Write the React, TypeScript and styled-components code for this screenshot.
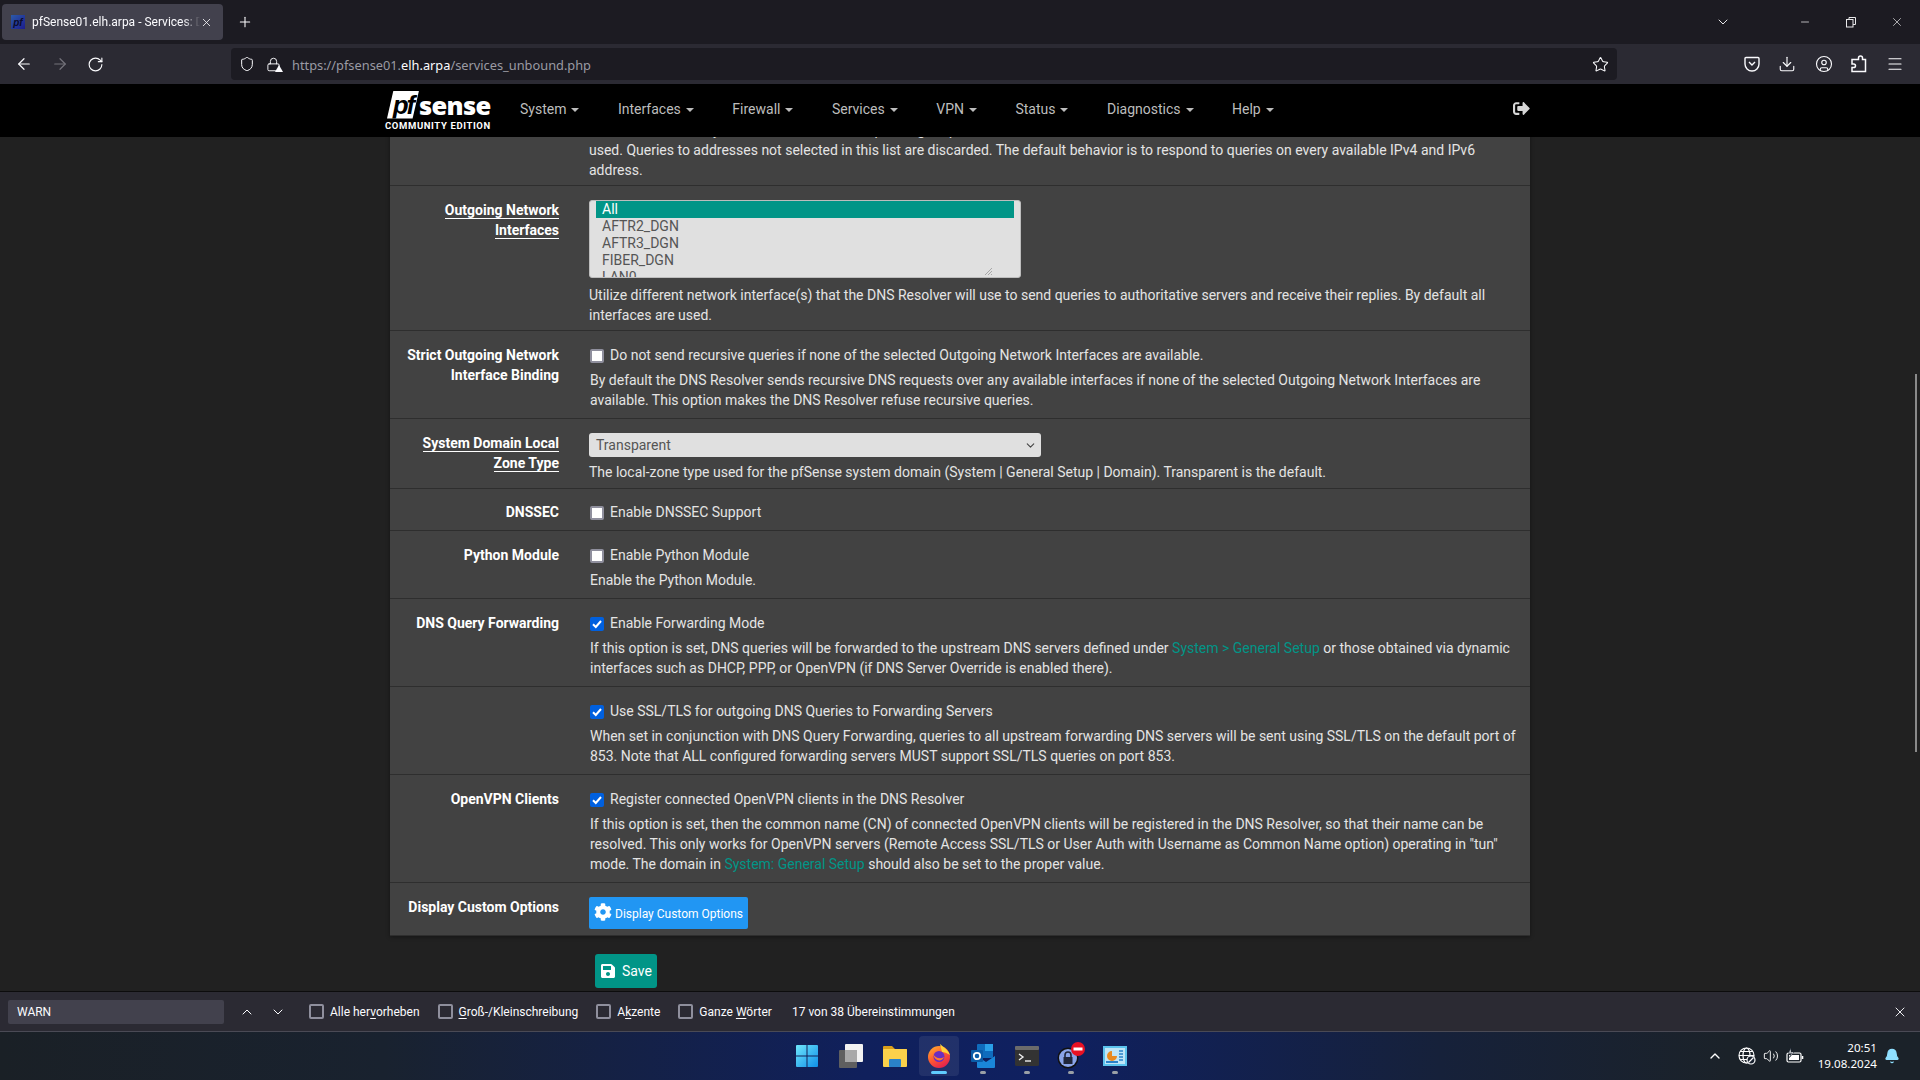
import React from 'react';
import styled, { createGlobalStyle } from 'styled-components';
import {
  ArrowLeft,
  ArrowRight,
  Bell,
  ChevronDown,
  ChevronUp,
  CircleUser,
  Download,
  Lock,
  Menu,
  Minus,
  Plus,
  RotateCw,
  Shield,
  Star,
  Volume2,
  X,
} from 'lucide-react';
import { FaCog, FaSave, FaSignOutAlt } from 'react-icons/fa';

const Global = createGlobalStyle`
  html, body { margin: 0; padding: 0; height: 100%; background: #212121; overflow: hidden; }
  * { box-sizing: border-box; }
`;

const Shell = styled.div`
  display: flex;
  flex-direction: column;
  width: 1920px;
  height: 1080px;
  overflow: hidden;
  font-family: 'Roboto', 'Open Sans', sans-serif;
`;

/* browser chrome */
const TabBar = styled.div`
  display: flex;
  align-items: center;
  height: 44px;
  flex: none;
  padding-left: 2px;
  background: #1c1b22;
  color: #fbfbfe;
`;

const Tab = styled.div`
  display: flex;
  align-items: center;
  width: 221px;
  height: 36px;
  padding: 0 10px 0 9px;
  border-radius: 4px;
  background: #42414d;
  font-size: 12px;
`;

const Favicon = styled.span`
  display: flex;
  align-items: center;
  justify-content: center;
  width: 14px;
  height: 14px;
  flex: none;
  background: linear-gradient(135deg, #2c5aa8, #1c1c8c);
  color: #0c0c2c;
  font: italic 700 10px 'Liberation Sans', sans-serif;
`;

const TabTitle = styled.span`
  flex: 1;
  margin-left: 7px;
  overflow: hidden;
  white-space: nowrap;
  -webkit-mask-image: linear-gradient(90deg, #000 90%, transparent 100%);
  mask-image: linear-gradient(90deg, #000 90%, transparent 100%);
`;

const NewTab = styled.span`
  display: flex;
  margin-left: 14px;
`;

const WindowControls = styled.div`
  display: flex;
  align-items: center;
  margin-left: auto;
`;

const WindowSlot = styled.span<{ $w: number }>`
  display: flex;
  align-items: center;
  justify-content: center;
  width: ${(p) => p.$w}px;
  color: #e8e8ea;
`;

const Toolbar = styled.div`
  display: flex;
  align-items: center;
  height: 40px;
  flex: none;
  background: #2b2a33;
  color: #fbfbfe;
`;

const NavButtons = styled.div`
  display: flex;
  align-items: center;
  gap: 18px;
  width: 231px;
  padding-left: 15px;
`;

const UrlBar = styled.div`
  display: flex;
  align-items: center;
  width: 1386px;
  height: 32px;
  padding: 0 8px 0 8px;
  border-radius: 4px;
  background: #1c1b22;
  color: #9a9aa3;
`;

const UrlText = styled.span`
  padding-top: 1px;
  font: 12.8px 'Noto Sans', sans-serif;
`;

const LockWrap = styled.span`
  position: relative;
  display: flex;
  margin: 0 11px 0 11px;
  color: #fbfbfe;
`;

const LockWarn = styled.span`
  position: absolute;
  right: -2px;
  bottom: 0;
  width: 0;
  height: 0;
  border-left: 4px solid transparent;
  border-right: 4px solid transparent;
  border-bottom: 7px solid #fbfbfe;
`;

const Host = styled.span`
  color: #fbfbfe;
`;

const StarSlot = styled.span`
  display: flex;
  margin-left: auto;
`;

const ToolIcons = styled.div`
  display: flex;
  align-items: center;
  gap: 18.4px;
  margin-left: 127px;
`;

/* pfSense navbar */
const Navbar = styled.div`
  height: 53px;
  flex: none;
  background: #000;
`;

const Container = styled.div`
  display: flex;
  align-items: center;
  width: 1170px;
  height: 100%;
  margin: 0 auto;
  padding: 0 15px 0 10px;
`;

const Logo = styled.div`
  display: flex;
  flex-direction: column;
  width: 106px;
  margin-right: 29px;
`;

const LogoTop = styled.div`
  display: flex;
  align-items: center;
  height: 28px;
  padding-left: 2px;
`;

const LogoPf = styled.span`
  display: flex;
  align-items: center;
  justify-content: center;
  width: 32px;
  height: 28px;
  background: #fff;
  clip-path: polygon(20% 0, 100% 0, 80% 100%, 0 100%);
  color: #000;
  font: italic 700 26px/1 'Liberation Sans', sans-serif;
  letter-spacing: -2px;
`;

const LogoSense = styled.span`
  color: #fff;
  font: 800 25.5px/28px 'Open Sans', sans-serif;
  letter-spacing: -0.7px;
`;

const LogoEdition = styled.span`
  margin-top: 2px;
  color: #fff;
  font: 700 9.5px/10px 'Roboto', sans-serif;
  letter-spacing: 0.62px;
  white-space: nowrap;
`;

const NavMenu = styled.div`
  display: flex;
  align-items: center;
  gap: 38.5px;
  margin-top: -3px;
  font: 14px 'Roboto', sans-serif;
  color: #bdbdbd;
`;

const NavItem = styled.span`
  display: flex;
  align-items: center;
  gap: 5px;
  &::after {
    content: '';
    margin-top: 2px;
    border-left: 4px solid transparent;
    border-right: 4px solid transparent;
    border-top: 4px solid #bdbdbd;
  }
`;

const Logout = styled.span`
  display: flex;
  margin-left: auto;
  color: #d6d6d6;
  transform: translateY(-2px);
`;

/* page */
const Page = styled.div`
  position: relative;
  flex: 1;
  overflow: hidden;
  background: #212121;
  font: 14px/20px 'Roboto', sans-serif;
  color: #e4e4e4;
`;

const Scrollbar = styled.div`
  position: absolute;
  top: 237px;
  right: 3px;
  width: 2px;
  height: 378px;
  background: #8a8a8a;
`;

const Content = styled.div`
  width: 1140px;
  margin: -17px auto 0;
`;

const Panel = styled.div`
  background: #424242;
  box-shadow: 0 1px 4px rgba(0, 0, 0, 0.4);
`;

const Row = styled.div<{ $top?: number; $bottom?: number }>`
  display: grid;
  grid-template-columns: 169px 1fr;
  column-gap: 30px;
  padding: ${(p) => p.$top ?? 14}px 12px ${(p) => p.$bottom ?? 8}px 0;
  border-bottom: 1px solid #2e2e2e;
`;

const Label = styled.div`
  text-align: right;
  font-weight: 700;
  color: #fff;
`;

const Linked = styled.span`
  border-bottom: 1px solid #fff;
`;

const Field = styled.div`
  min-width: 0;
`;

const Help = styled.div<{ $inset?: boolean; $gap?: number }>`
  margin-top: ${(p) => p.$gap ?? 5}px;
  padding-left: ${(p) => (p.$inset ? 1 : 0)}px;
`;

const Link = styled.span`
  color: #019587;
`;

const CheckLine = styled.div`
  display: flex;
  align-items: center;
  padding-left: 1px;
  gap: 6px;
`;

const Box = styled.span<{ $on?: boolean }>`
  display: flex;
  align-items: center;
  justify-content: center;
  width: 14px;
  height: 14px;
  flex: none;
  margin-top: 1px;
  border-radius: 2px;
  background: ${(p) => (p.$on ? '#0060df' : '#fff')};
  border: ${(p) => (p.$on ? 'none' : '2px solid #8f8f9d')};
`;

const ListBox = styled.div`
  position: relative;
  width: 432px;
  height: 78px;
  padding: 0 6px;
  overflow: hidden;
  border: 1px solid #bdbdbd;
  border-radius: 3px;
  background: #e0e0e0;
  color: #555;
  line-height: 17px;
`;

const Option = styled.div<{ $on?: boolean }>`
  height: 17px;
  padding-left: 6px;
  background: ${(p) => (p.$on ? '#019587' : 'transparent')};
  color: ${(p) => (p.$on ? '#fff' : '#555')};
`;

const Grip = styled.svg`
  position: absolute;
  right: 28px;
  bottom: 2px;
`;

const SelectBox = styled.div`
  display: flex;
  align-items: center;
  justify-content: space-between;
  width: 452px;
  height: 24px;
  padding: 0 4px 0 7px;
  border-radius: 3px;
  background: #e0e0e0;
  color: #555;
`;

const Button = styled.div<{ $bg: string }>`
  display: inline-flex;
  align-items: center;
  color: #fff;
  background: ${(p) => p.$bg};
`;

const CustomButton = styled(Button)`
  height: 32px;
  padding: 2px 5px 0 5px;
  gap: 3px;
  border-radius: 2px;
  font-size: 12px;
  svg { margin-top: -4px; }
`;

const SaveRow = styled.div`
  padding: 18px 0 0 205px;
`;

const SaveButton = styled(Button)`
  height: 34px;
  padding: 0 5px;
  gap: 6px;
  border-radius: 3px;
`;

/* find bar */
const FindBar = styled.div`
  display: flex;
  align-items: center;
  height: 41px;
  flex: none;
  padding-right: 12px;
  border-top: 1px solid #0c0c0d;
  border-bottom: 1px solid #4a4a55;
  background: #2b2a33;
  color: #fbfbfe;
  font-size: 12px;
`;

const FindInput = styled.div`
  display: flex;
  align-items: center;
  width: 216px;
  height: 24px;
  margin-left: 8px;
  padding-left: 9px;
  border-radius: 2px;
  background: #42414d;
`;

const FindArrows = styled.div`
  display: flex;
  gap: 15px;
  margin: 0 23px 0 15px;
`;

const FindOption = styled.label`
  display: flex;
  align-items: center;
  gap: 6px;
  margin-right: 18px;
  u { text-underline-offset: 2px; }
`;

const FindBox = styled.span`
  width: 15px;
  height: 15px;
  border: 2px solid #8f8f9d;
  border-radius: 2px;
`;

const FindCount = styled.span`
  margin-left: 2px;
`;

const FindClose = styled.span`
  display: flex;
  margin-left: auto;
`;

/* taskbar */
const Taskbar = styled.div`
  position: relative;
  display: flex;
  align-items: center;
  justify-content: center;
  height: 48px;
  flex: none;
  background: linear-gradient(90deg, #1a2026 0, #19222f 20%, #10205c 45%, #0f2060 55%, #16213a 75%, #1b2229 90%);
  color: #fff;
`;

const TaskIcons = styled.div`
  display: flex;
  align-items: center;
  transform: translateX(1px);
`;

const TaskSlot = styled.span<{ $active?: boolean; $dot?: boolean }>`
  position: relative;
  display: flex;
  align-items: center;
  justify-content: center;
  width: 40px;
  height: 40px;
  margin: 0 2px;
  border-radius: 4px;
  background: ${(p) => (p.$active ? 'rgba(255,255,255,0.08)' : 'transparent')};
  &::after {
    content: '';
    display: ${(p) => (p.$active || p.$dot ? 'block' : 'none')};
    position: absolute;
    bottom: 2px;
    left: 50%;
    width: ${(p) => (p.$active ? 16 : 6)}px;
    height: 3px;
    margin-left: ${(p) => (p.$active ? -8 : -3)}px;
    border-radius: 2px;
    background: ${(p) => (p.$active ? '#60cdff' : '#9aa0a6')};
  }
`;

const Tray = styled.div`
  position: absolute;
  top: 0;
  right: 0;
  bottom: 0;
  display: flex;
  align-items: center;
`;

const TrayIcon = styled.span<{ $w: number }>`
  display: flex;
  justify-content: center;
  width: ${(p) => p.$w}px;
`;

const Clock = styled.div`
  margin: 0 7px 0 10px;
  text-align: right;
  font: 11.6px/16px 'Noto Sans', sans-serif;
`;

const BellSlot = styled.span`
  display: flex;
  margin-right: 20px;
  color: #8fe0ff;
`;

const RestoreIcon = () => (
  <svg width="12" height="12" viewBox="0 0 12 12" fill="none" stroke="currentColor">
    <rect x="1.5" y="3.5" width="6.5" height="7.5" />
    <path d="M4 3.5V1.5H10.5V8.5H8" />
  </svg>
);

const PocketIcon = () => (
  <svg width="16" height="16" viewBox="0 0 16 16" fill="none" stroke="currentColor" strokeWidth="1.4">
    <path d="M2 1.5h12a1 1 0 0 1 1 1V8a7 7 0 0 1-14 0V2.5a1 1 0 0 1 1-1z" />
    <path d="M5 6l3 3 3-3" />
  </svg>
);

const PuzzleIcon = () => (
  <svg width="16" height="18" viewBox="0 0 16 18" fill="none" stroke="currentColor" strokeWidth="1.5">
    <path d="M8 4.500V3a2 2 0 0 1 4 0v1.500h3v12H1.500v-4h1.700a1.800 1.800 0 0 0 0-3.600H1.500V4.500z" transform="translate(-0.500 0)" />
  </svg>
);

const TrayGlobeIcon = () => (
  <svg width="18" height="18" viewBox="0 0 18 18" fill="none" stroke="currentColor" strokeWidth="1.2">
    <circle cx="8.500" cy="8.500" r="7.500" />
    <ellipse cx="8.500" cy="8.500" rx="3.500" ry="7.500" />
    <path d="M1 8.500h15M2 4.500h13M2 12.500h8" />
    <circle cx="13" cy="13" r="4" fill="#19222f" />
    <path d="M10.500 15.500l5-5" />
  </svg>
);

const TrayBatteryIcon = () => (
  <svg width="18" height="16" viewBox="0 0 18 16" fill="none" stroke="currentColor" strokeWidth="1.2">
    <rect x="1" y="5" width="14" height="9" rx="1.500" />
    <rect x="3" y="7" width="10" height="5" fill="currentColor" stroke="none" />
    <path d="M16.500 8v3" strokeWidth="1.600" />
    <path d="M5 0L2.500 5h3L3.500 9.500 8 4H5z" fill="currentColor" stroke="#19222f" strokeWidth="0.600" />
  </svg>
);

const WindowsIcon = () => (
  <svg width="24" height="24" viewBox="0 0 24 24">
    <defs>
      <linearGradient id="win" x1="0" y1="0" x2="1" y2="1">
        <stop offset="0" stopColor="#6fe6fb" />
        <stop offset="1" stopColor="#0f8fe8" />
      </linearGradient>
    </defs>
    <path fill="url(#win)" d="M1 2a1 1 0 0 1 1-1h9.500v10.500H1zM12.500 1H22a1 1 0 0 1 1 1v9.500H12.500zM1 12.500h10.500V23H2a1 1 0 0 1-1-1zM12.500 12.500H23V22a1 1 0 0 1-1 1h-9.500z" />
  </svg>
);

const DesktopsIcon = () => (
  <svg width="24" height="24" viewBox="0 0 24 24">
    <rect x="0" y="6" width="18" height="18" rx="1" fill="#5f5f5f" />
    <rect x="6" y="0" width="18" height="18" rx="1" fill="#f2f2f2" />
    <rect x="6" y="6" width="12" height="12" fill="#a8a8a8" />
  </svg>
);

const FolderIcon = () => (
  <svg width="24" height="24" viewBox="0 0 24 24">
    <path d="M0 3a1 1 0 0 1 1-1h8l3 3h12v3H0z" fill="#d99e1a" />
    <rect x="0" y="5" width="24" height="18" rx="1" fill="#fbd14b" />
    <rect x="6" y="15" width="12" height="8" rx="1" fill="#2a82c9" />
  </svg>
);

const FirefoxIcon = () => (
  <svg width="24" height="24" viewBox="0 0 24 24">
    <defs>
      <linearGradient id="ff" x1="0" y1="0" x2="0.6" y2="1">
        <stop offset="0" stopColor="#ffb52e" />
        <stop offset="0.55" stopColor="#ff5a30" />
        <stop offset="1" stopColor="#e3244d" />
      </linearGradient>
    </defs>
    <circle cx="12" cy="13" r="11" fill="url(#ff)" />
    <path d="M13 0c3 3 8 5 10 11-3-2-6-3-8-3z" fill="#ffd23a" />
    <circle cx="12" cy="12.500" r="5.500" fill="#6b2ec0" />
    <path d="M6 10c3 5 8 5 11 3-2 5-9 5-11-3z" fill="#ff7a2e" />
  </svg>
);

const OutlookIcon = () => (
  <svg width="24" height="24" viewBox="0 0 24 24">
    <rect x="6" y="0" width="16" height="14" rx="1" fill="#0f6cbd" />
    <rect x="14" y="0" width="8" height="7" fill="#2aa0e8" />
    <path d="M6 12l9 6 9-6v11a1 1 0 0 1-1 1H7a1 1 0 0 1-1-1z" fill="#1a86d8" />
    <rect x="0" y="6" width="12" height="12" rx="1" fill="#0a5ca8" />
    <circle cx="6" cy="12" r="3.200" fill="none" stroke="#fff" strokeWidth="1.800" />
  </svg>
);

const TerminalIcon = () => (
  <svg width="24" height="24" viewBox="0 0 24 24">
    <rect x="0" y="2" width="24" height="20" rx="1.500" fill="#333" />
    <rect x="0" y="2" width="24" height="4" rx="1" fill="#6b6b6b" />
    <path d="M4 10l4 3-4 3" fill="none" stroke="#eee" strokeWidth="1.400" />
    <path d="M10 17h6" stroke="#eee" strokeWidth="1.400" />
  </svg>
);

const VpnIcon = () => (
  <svg width="28" height="28" viewBox="0 0 28 28">
    <circle cx="11" cy="16" r="10.500" fill="#111" />
    <circle cx="11" cy="16" r="9" fill="#8aa4e8" />
    <rect x="6.500" y="15" width="9" height="7" fill="#20263a" />
    <path d="M8 15v-2a3 3 0 0 1 6 0v2" fill="none" stroke="#20263a" strokeWidth="1.600" />
    <circle cx="21" cy="7" r="7" fill="#e81123" />
    <rect x="16.500" y="5.500" width="9" height="3" fill="#fff" />
  </svg>
);

const DashboardIcon = () => (
  <svg width="24" height="24" viewBox="0 0 24 24">
    <rect x="0" y="2" width="24" height="20" fill="#5cc4ee" />
    <rect x="2" y="4" width="20" height="16" fill="#bfe6f7" />
    <path d="M9 7a5 5 0 1 0 5 5H9z" fill="#e88a1f" />
    <rect x="3" y="17" width="12" height="2" fill="#2a82c9" />
    <path d="M16 7h4M16 10h4M16 13h4M16 16h4" stroke="#2a82c9" strokeWidth="1.500" />
  </svg>
);

const checkMark = (
  <svg width="10" height="10" viewBox="0 0 10 10" fill="none" stroke="#fff" strokeWidth="2">
    <path d="M1 5.200l2.800 2.800L9 2" />
  </svg>
);

const Check = ({ on, children }: { on?: boolean; children: React.ReactNode }) => (
  <CheckLine>
    <Box $on={on}>{on && checkMark}</Box>
    <span>{children}</span>
  </CheckLine>
);

const menu = ['System', 'Interfaces', 'Firewall', 'Services', 'VPN', 'Status', 'Diagnostics', 'Help'];

export default function App() {
  return (
    <Shell>
      <Global />
      <TabBar>
        <Tab>
          <Favicon>pf</Favicon>
          <TabTitle>pfSense01.elh.arpa - Services: DNS Resolver</TabTitle>
          <X size={13} strokeWidth={1.5} />
        </Tab>
        <NewTab>
          <Plus size={16} strokeWidth={1.6} />
        </NewTab>
        <WindowControls>
          <WindowSlot $w={46}>
            <ChevronDown size={16} strokeWidth={1.5} />
          </WindowSlot>
          <WindowSlot $w={36} />
          <WindowSlot $w={46}>
            <Minus size={12} strokeWidth={1.5} />
          </WindowSlot>
          <WindowSlot $w={46}>
            <RestoreIcon />
          </WindowSlot>
          <WindowSlot $w={46}>
            <X size={14} strokeWidth={1.2} />
          </WindowSlot>
        </WindowControls>
      </TabBar>
      <Toolbar>
        <NavButtons>
          <ArrowLeft size={18} strokeWidth={1.6} />
          <ArrowRight size={18} strokeWidth={1.6} color="#74737b" />
          <RotateCw size={17} strokeWidth={1.6} />
        </NavButtons>
        <UrlBar>
          <Shield size={16} strokeWidth={1.5} color="#fbfbfe" />
          <LockWrap>
            <Lock size={15} strokeWidth={1.5} />
            <LockWarn />
          </LockWrap>
          <UrlText>
            https://pfsense01.<Host>elh.arpa</Host>/services_unbound.php
          </UrlText>
          <StarSlot>
            <Star size={17} strokeWidth={1.5} color="#fbfbfe" />
          </StarSlot>
        </UrlBar>
        <ToolIcons>
          <PocketIcon />
          <Download size={18} strokeWidth={1.5} />
          <CircleUser size={18} strokeWidth={1.5} />
          <PuzzleIcon />
          <Menu size={18} strokeWidth={1.5} />
        </ToolIcons>
      </Toolbar>
      <Navbar>
        <Container>
          <Logo>
            <LogoTop>
              <LogoPf>pf</LogoPf>
              <LogoSense>sense</LogoSense>
            </LogoTop>
            <LogoEdition>COMMUNITY EDITION</LogoEdition>
          </Logo>
          <NavMenu>
            {menu.map((m) => (
              <NavItem key={m}>{m}</NavItem>
            ))}
          </NavMenu>
          <Logout>
            <FaSignOutAlt size={17} />
          </Logout>
        </Container>
      </Navbar>
      <Page>
        <Content>
          <Panel>
            <Row $top={0} $bottom={5}>
              <Label />
              <Field>
                Interface IPs used by the DNS Resolver for responding to queries from clients. If an interface has both IPv4 and IPv6 IPs, both are
                <br />
                used. Queries to addresses not selected in this list are discarded. The default behavior is to respond to queries on every available IPv4 and IPv6
                <br />
                address.
              </Field>
            </Row>
            <Row $bottom={5}>
              <Label>
                <Linked>Outgoing Network Interfaces</Linked>
              </Label>
              <Field>
                <ListBox>
                  <Option $on>All</Option>
                  <Option>AFTR2_DGN</Option>
                  <Option>AFTR3_DGN</Option>
                  <Option>FIBER_DGN</Option>
                  <Option>LAN0</Option>
                  <Grip width="8" height="8" viewBox="0 0 8 8" stroke="#a8a8a8">
                    <path d="M1 8L8 1M4 8L8 4M7 8L8 7" />
                  </Grip>
                </ListBox>
                <Help $gap={7}>
                  Utilize different network interface(s) that the DNS Resolver will use to send queries to authoritative servers and receive their replies. By default all
                  <br />
                  interfaces are used.
                </Help>
              </Field>
            </Row>
            <Row>
              <Label>Strict Outgoing Network Interface Binding</Label>
              <Field>
                <Check>Do not send recursive queries if none of the selected Outgoing Network Interfaces are available.</Check>
                <Help $inset>
                  By default the DNS Resolver sends recursive DNS requests over any available interfaces if none of the selected Outgoing Network Interfaces are
                  <br />
                  available. This option makes the DNS Resolver refuse recursive queries.
                </Help>
              </Field>
            </Row>
            <Row $bottom={6}>
              <Label>
                <Linked>System Domain Local Zone Type</Linked>
              </Label>
              <Field>
                <SelectBox>
                  Transparent
                  <ChevronDown size={13} strokeWidth={2} color="#444" />
                </SelectBox>
                <Help>The local-zone type used for the pfSense system domain (System | General Setup | Domain). Transparent is the default.</Help>
              </Field>
            </Row>
            <Row $top={13} $bottom={8}>
              <Label>DNSSEC</Label>
              <Field>
                <Check>Enable DNSSEC Support</Check>
              </Field>
            </Row>
            <Row>
              <Label>Python Module</Label>
              <Field>
                <Check>Enable Python Module</Check>
                <Help $inset>Enable the Python Module.</Help>
              </Field>
            </Row>
            <Row>
              <Label>DNS Query Forwarding</Label>
              <Field>
                <Check on>Enable Forwarding Mode</Check>
                <Help $inset>
                  If this option is set, DNS queries will be forwarded to the upstream DNS servers defined under <Link>System &gt; General Setup</Link> or those obtained via dynamic
                  <br />
                  interfaces such as DHCP, PPP, or OpenVPN (if DNS Server Override is enabled there).
                </Help>
              </Field>
            </Row>
            <Row>
              <Label />
              <Field>
                <Check on>Use SSL/TLS for outgoing DNS Queries to Forwarding Servers</Check>
                <Help $inset>
                  When set in conjunction with DNS Query Forwarding, queries to all upstream forwarding DNS servers will be sent using SSL/TLS on the default port of
                  <br />
                  853. Note that ALL configured forwarding servers MUST support SSL/TLS queries on port 853.
                </Help>
              </Field>
            </Row>
            <Row>
              <Label>OpenVPN Clients</Label>
              <Field>
                <Check on>Register connected OpenVPN clients in the DNS Resolver</Check>
                <Help $inset>
                  If this option is set, then the common name (CN) of connected OpenVPN clients will be registered in the DNS Resolver, so that their name can be
                  <br />
                  resolved. This only works for OpenVPN servers (Remote Access SSL/TLS or User Auth with Username as Common Name option) operating in "tun"
                  <br />
                  mode. The domain in <Link>System: General Setup</Link> should also be set to the proper value.
                </Help>
              </Field>
            </Row>
            <Row $bottom={6}>
              <Label>Display Custom Options</Label>
              <Field>
                <CustomButton $bg="#2196f3">
                  <FaCog size={18} />
                  Display Custom Options
                </CustomButton>
              </Field>
            </Row>
          </Panel>
          <SaveRow>
            <SaveButton $bg="#019587">
              <FaSave size={16} />
              Save
            </SaveButton>
          </SaveRow>
        </Content>
        <Scrollbar />
      </Page>
      <FindBar>
        <FindInput>WARN</FindInput>
        <FindArrows>
          <ChevronUp size={16} strokeWidth={1.5} />
          <ChevronDown size={16} strokeWidth={1.5} />
        </FindArrows>
        <FindOption>
          <FindBox />
          <span>
            Alle her<u>v</u>orheben
          </span>
        </FindOption>
        <FindOption>
          <FindBox />
          <span>
            <u>G</u>roß-/Kleinschreibung
          </span>
        </FindOption>
        <FindOption>
          <FindBox />
          <span>
            A<u>k</u>zente
          </span>
        </FindOption>
        <FindOption>
          <FindBox />
          <span>
            Ganze <u>W</u>örter
          </span>
        </FindOption>
        <FindCount>17 von 38 Übereinstimmungen</FindCount>
        <FindClose>
          <X size={16} strokeWidth={1.4} />
        </FindClose>
      </FindBar>
      <Taskbar>
        <TaskIcons>
          <TaskSlot>
            <WindowsIcon />
          </TaskSlot>
          <TaskSlot>
            <DesktopsIcon />
          </TaskSlot>
          <TaskSlot>
            <FolderIcon />
          </TaskSlot>
          <TaskSlot $active>
            <FirefoxIcon />
          </TaskSlot>
          <TaskSlot $dot>
            <OutlookIcon />
          </TaskSlot>
          <TaskSlot $dot>
            <TerminalIcon />
          </TaskSlot>
          <TaskSlot $dot>
            <VpnIcon />
          </TaskSlot>
          <TaskSlot $dot>
            <DashboardIcon />
          </TaskSlot>
        </TaskIcons>
        <Tray>
          <TrayIcon $w={38}>
            <ChevronUp size={16} strokeWidth={2} />
          </TrayIcon>
          <TrayIcon $w={26}>
            <TrayGlobeIcon />
          </TrayIcon>
          <TrayIcon $w={22}>
            <Volume2 size={16} strokeWidth={1.4} />
          </TrayIcon>
          <TrayIcon $w={26}>
            <TrayBatteryIcon />
          </TrayIcon>
          <Clock>
            20:51
            <br />
            19.08.2024
          </Clock>
          <BellSlot>
            <Bell size={16} fill="currentColor" />
          </BellSlot>
        </Tray>
      </Taskbar>
    </Shell>
  );
}
